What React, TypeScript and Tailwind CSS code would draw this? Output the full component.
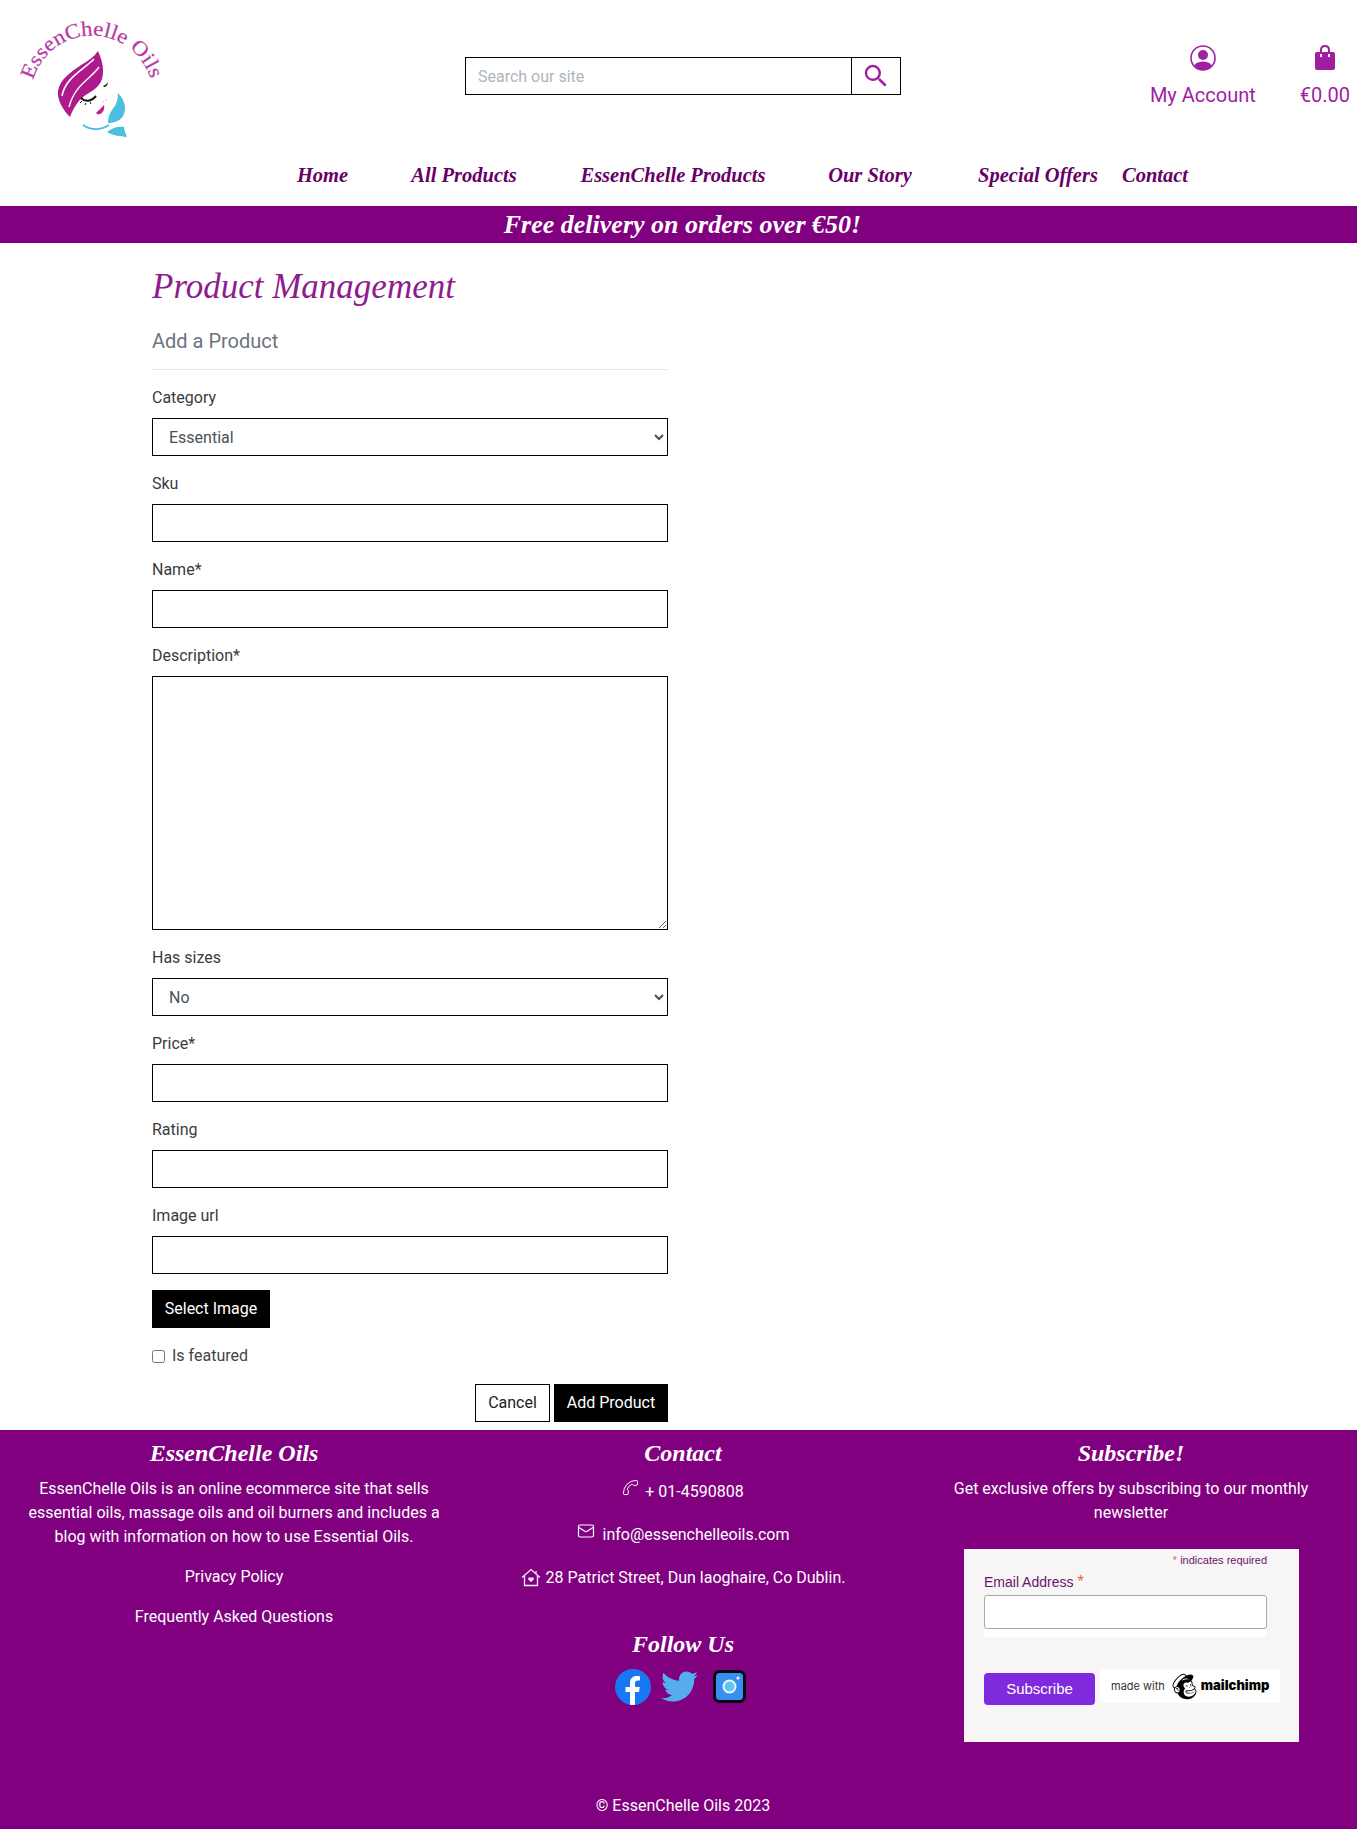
import { Mail, Phone } from "lucide-react";
import { FaMailchimp, FaTwitter } from "react-icons/fa";
import { MdSearch } from "react-icons/md";

const script = "font-['Liberation_Serif',serif] italic";

const Logo = () => (
  <svg width="150" height="130" viewBox="0 0 150 130" className="shrink-0">
    <defs>
      <path id="logo-arc" d="M 16.1 90 A 61 61 0 1 1 137.9 90" />
    </defs>
    <text fontFamily="Liberation Serif" fontSize="21" fill="#b83aa3" stroke="#b83aa3" strokeWidth="0.2">
      <textPath href="#logo-arc" startOffset="20" textLength="157" lengthAdjust="spacingAndGlyphs">
        EssenChelle Oils
      </textPath>
    </text>
    <path
      d="M83 41C86 48 90 58 87 69C84 79 74 82 68 87C62 92 58 99 55 107C48 100 42 90 43 81C45 69 56 62 66 55C73 51 79 47 83 41Z"
      fill="#ae1a8c"
    />
    <path d="M79 49C68 60 50 68 47 86" stroke="#fff" strokeWidth="1.6" fill="none" />
    <path d="M84 57C76 69 60 74 54 97" stroke="#fff" strokeWidth="1.4" fill="none" />
    <path d="M66 88C70 92 76 92 81 86" stroke="#111" strokeWidth="2" fill="none" />
    <path d="M67 91L65 93M71 93L70 95M75 92L76 94" stroke="#111" strokeWidth="1" />
    <path d="M88 76C90 75 92 74 93 72C93 75 91 77 89 77Z" fill="#222" />
    <circle cx="88" cy="92" r="0.7" fill="#bbb" />
    <circle cx="91" cy="90" r="0.7" fill="#bbb" />
    <path d="M81 103C84 100 87 97 89 95C90 99 88 103 85 104C83 105 82 104 81 103Z" fill="#c41f94" />
    <path d="M103 83C110 90 112 99 108 106C104 112 98 113 93 113C93 105 96 101 100 96C102 92 103 88 103 83Z" fill="#4bbfe0" />
    <path d="M68 115C77 121 86 120 94 115" stroke="#4bbfe0" strokeWidth="2" fill="none" />
    <path d="M92 122C98 117 104 116 109 117C109 121 111 124 112 127C105 126 98 126 92 122Z" fill="#4bbfe0" />
  </svg>
);

const UserIcon = () => (
  <svg width="26" height="26" viewBox="0 0 26 26">
    <defs>
      <clipPath id="user-clip">
        <circle cx="13" cy="13" r="12" />
      </clipPath>
    </defs>
    <circle cx="13" cy="13" r="12" fill="none" stroke="#a01ea0" strokeWidth="1.6" />
    <circle cx="13" cy="10" r="5" fill="#a01ea0" />
    <ellipse cx="13" cy="22" rx="9" ry="5.5" fill="#a01ea0" clipPath="url(#user-clip)" />
  </svg>
);

const BagIcon = () => (
  <svg width="20" height="25" viewBox="0 0 20 25">
    <path d="M6 7V5C6 2.6 7.6 1 10 1C12.4 1 14 2.6 14 5V7" fill="none" stroke="#a01ea0" strokeWidth="2" />
    <rect x="0" y="7" width="20" height="18" rx="2" fill="#a01ea0" />
    <rect x="5" y="9" width="2" height="3" fill="#fff" />
    <rect x="13" y="9" width="2" height="3" fill="#fff" />
  </svg>
);

const HouseIcon = () => (
  <svg width="20" height="20" viewBox="0 0 20 20" fill="none" stroke="#fbe8fb" strokeWidth="1.3">
    <path d="M1 9.5L10 1.5L19 9.5" />
    <path d="M3.5 8V17.5H16.5V8" />
    <path d="M15 3V5.5" />
    <path
      d="M10 14C7.5 12.2 6.8 11 7.3 9.9C7.9 8.8 9.4 9 10 10C10.6 9 12.1 8.8 12.7 9.9C13.2 11 12.5 12.2 10 14Z"
      fill="#fbe8fb"
      stroke="none"
    />
  </svg>
);

const FacebookIcon = () => (
  <svg width="36" height="36" viewBox="0 0 36 36">
    <defs>
      <clipPath id="fb-clip">
        <circle cx="18" cy="18" r="18" />
      </clipPath>
    </defs>
    <circle cx="18" cy="18" r="18" fill="#1877f2" />
    <path
      d="M15 36V23H10.5V18H15V14C15 9.5 17.7 7 21.8 7C23.3 7 25 7.3 25 7.3V11.6H22.8C20.6 11.6 20 13 20 14.4V18H24.8L24 23H20V36Z"
      fill="#fff"
      clipPath="url(#fb-clip)"
    />
  </svg>
);

const CameraIcon = () => (
  <svg width="33" height="33" viewBox="0 0 33 33">
    <rect x="1.5" y="1.5" width="30" height="30" rx="5" fill="#3a8eee" stroke="#0a0a14" strokeWidth="3" />
    <circle cx="16.5" cy="16.5" r="6" fill="#5cc8f8" stroke="#e8f4ff" strokeWidth="2" />
    <circle cx="25" cy="8" r="1.6" fill="#e8f4ff" />
  </svg>
);

const Field = ({ label, children }: { label: string; children: React.ReactNode }) => (
  <div className="mb-4">
    <label className="block mb-2 leading-6 text-[#3b3b3b]">{label}</label>
    {children}
  </div>
);

const TextBox = () => <input type="text" className="block w-full h-[38px] border border-black bg-white" />;

const Picker = ({ value }: { value: string }) => (
  <select defaultValue={value} className="block w-full h-[38px] px-3 border border-black bg-white text-[#495057]">
    <option>{value}</option>
  </select>
);

const App = () => {
  return (
    <div className="w-[1357px] h-[1829px] bg-white font-['Roboto',sans-serif] text-base overflow-hidden">
      <header className="h-[206px]">
        <div className="flex h-[146px] pl-[15px] pt-[10px] pr-[7px]">
          <Logo />
          <div className="flex ml-[300px] mt-[47px] w-[436px] h-[38px] border border-black">
            <input
              type="text"
              placeholder="Search our site"
              className="flex-1 min-w-0 px-3 pt-[2px] placeholder:text-[#adb5bd] text-base outline-none"
            />
            <button className="flex w-[49px] items-center justify-center border-l border-black text-[#a01ea0]">
              <MdSearch size={30} />
            </button>
          </div>
          <div className="ml-auto flex gap-[44px] pt-[35px] text-[#a01ea0]">
            <div className="flex flex-col items-center">
              <UserIcon />
              <span className="mt-[12px] text-xl leading-6">My Account</span>
            </div>
            <div className="flex flex-col items-center">
              <BagIcon />
              <span className="mt-[13px] text-xl leading-6">€0.00</span>
            </div>
          </div>
        </div>
        <nav className={`flex pl-[297px] pt-[14px] text-[20.5px] font-bold whitespace-nowrap text-[#660066] ${script}`}>
          <span className="flex justify-center w-[51px]">Home</span>
          <span className="flex justify-center ml-[62px] w-[108px]">All Products</span>
          <span className="flex justify-center ml-[64px] w-[182px]">EssenChelle Products</span>
          <span className="flex justify-center ml-[64px] w-[84px]">Our Story</span>
          <span className="flex justify-center ml-[65px] w-[122px]">Special Offers</span>
          <span className="flex justify-center ml-[22px] w-[68px]">Contact</span>
        </nav>
      </header>

      <div className={`h-[37px] pl-2 bg-[#800080] text-center text-[26px] leading-[37px] font-bold text-white ${script}`}>
        Free delivery on orders over €50!
      </div>

      <main className="h-[1187px] ml-[152px] w-[516px] pt-[25px]">
        <h1 className={`text-[35px] leading-[38px] text-[#8e1c8e] ${script}`}>Product Management</h1>
        <h2 className="mt-[23px] text-xl leading-6 text-[#6c757d]">Add a Product</h2>
        <hr className="mt-[16px] mb-[16px] border-[#e5e5e5]" />
        <Field label="Category">
          <Picker value="Essential" />
        </Field>
        <Field label="Sku">
          <TextBox />
        </Field>
        <Field label="Name*">
          <TextBox />
        </Field>
        <Field label="Description*">
          <textarea className="block w-full h-[254px] border border-black bg-white" />
        </Field>
        <Field label="Has sizes">
          <Picker value="No" />
        </Field>
        <Field label="Price*">
          <TextBox />
        </Field>
        <Field label="Rating">
          <TextBox />
        </Field>
        <Field label="Image url">
          <TextBox />
        </Field>
        <button className="block w-[118px] h-[38px] mb-4 bg-black text-white">Select Image</button>
        <label className="flex items-center h-6 mb-4 text-[#444]">
          <input type="checkbox" className="w-[13px] h-[13px] mr-[7px]" />
          Is featured
        </label>
        <div className="flex justify-end gap-1">
          <button className="w-[75px] h-[38px] border border-black text-[#222]">Cancel</button>
          <button className="w-[114px] h-[38px] bg-black text-white">Add Product</button>
        </div>
      </main>

      <footer className="h-[399px] bg-[#800080] text-white text-center pt-[9px]">
        <div className="grid grid-cols-[468px_437px_452px] h-[352px]">
          <div className="px-6">
            <h3 className={`text-2xl leading-[29px] font-bold mb-[9px] ${script}`}>EssenChelle Oils</h3>
            <p className="leading-6 mb-4">
              EssenChelle Oils is an online ecommerce site that sells essential oils, massage oils and oil burners and
              includes a blog with information on how to use Essential Oils.
            </p>
            <p className="leading-6 mb-4">Privacy Policy</p>
            <p className="leading-6">Frequently Asked Questions</p>
          </div>
          <div className="pr-[7px]">
            <h3 className={`text-2xl leading-[29px] font-bold mb-[10px] ${script}`}>Contact</h3>
            <p className="flex items-center justify-center h-[27px] mb-4 gap-[6px]">
              <Phone size={17} strokeWidth={1.4} className="rotate-90 -translate-y-1" />
              <span>+ 01-4590808</span>
            </p>
            <p className="flex items-center justify-center h-[27px] mb-4 gap-2">
              <Mail size={18} strokeWidth={1.6} className="-translate-y-1" />
              <span>info@essenchelleoils.com</span>
            </p>
            <p className="flex items-center justify-center h-[27px] gap-[5px]">
              <HouseIcon />
              <span>28 Patrict Street, Dun laoghaire, Co Dublin.</span>
            </p>
            <h3 className={`mt-[39px] text-2xl leading-[29px] font-bold ${script}`}>Follow Us</h3>
            <div className="flex justify-center items-center mt-[9px] pr-[5px]">
              <FacebookIcon />
              <FaTwitter size={37} className="ml-[10px] text-[#55acee]" />
              <span className="ml-[15px]">
                <CameraIcon />
              </span>
            </div>
          </div>
          <div className="px-[30px]">
            <h3 className={`text-2xl leading-[29px] font-bold mb-[9px] ${script}`}>Subscribe!</h3>
            <p className="leading-6">Get exclusive offers by subscribing to our monthly newsletter</p>
            <div className="mt-[24px] -mx-[59px] ml-[29px] w-[335px] h-[193px] bg-[#f7f5f6] pl-5 pt-[5px] text-left font-['Liberation_Sans',sans-serif] text-[#6b146b]">
              <p className="pr-[32px] text-right text-[11px] leading-[13px]">
                <span className="text-[#e85c41]">*</span> indicates required
              </p>
              <label className="block mt-[5px] text-sm leading-[20px]">
                Email Address <span className="text-base leading-[16px] text-[#e85c41]">*</span>
              </label>
              <input type="text" className="block w-[283px] h-[34px] mt-[3px] border border-[#a9a9a9] rounded-[3px] bg-white" />
              <div className="w-[283px] h-[8px] bg-white rounded-b-[3px]" />
              <div className="flex items-start mt-[32px]">
                <button className="mt-[4px] w-[111px] h-[32px] rounded-[4px] bg-[#7f2bdd] text-white text-[15px]">
                  Subscribe
                </button>
                <div className="flex items-center ml-[5px] w-[180px] h-[34px] pl-[11px] bg-white rounded-[4px] text-black">
                  <span className="text-[11px] text-[#333] font-['Inter',sans-serif]">made with</span>
                  <FaMailchimp size={29} className="ml-[5px]" />
                  <span className="ml-[2px] text-[13px] font-black font-['Inter',sans-serif]">mailchimp</span>
                </div>
              </div>
            </div>
          </div>
        </div>
        <p className="leading-6 mt-[3px] pl-[9px]">© EssenChelle Oils 2023</p>
      </footer>
    </div>
  );
};

export default App;
